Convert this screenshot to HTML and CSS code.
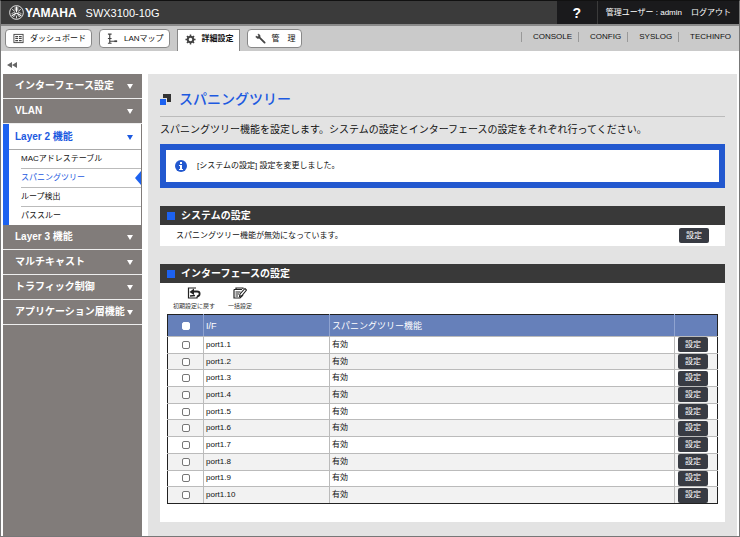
FILE: index.html
```html
<!DOCTYPE html>
<html lang="ja">
<head>
  <meta charset="UTF-8" />
  <meta name="viewport" content="width=device-width, initial-scale=1.0" />
  <title>SWX3100-10G</title>
  <link rel="stylesheet" href="styles.css">
</head>
<body>
  <header class="header">
    <svg class="logo-mark" viewBox="0 0 28 28" fill="none" stroke="#fff">
      <circle cx="14" cy="14" r="12.8" stroke-width="1.6"/>
      <path d="M14 13V3M14 15l-9 5M14 15l9 5" stroke-width="2.2"/>
      <path d="M11.500 4v5l2.500 2 2.500-2V4M4.500 16.500l4.500-2.500 3 1M7 22.500l4-2.500v-3M23.500 16.500L19 14l-3 1M21 22.500L17 20v-3" stroke-width="1.300"/>
      <path d="M6 8l5 4M22 8l-5 4M14 20v5" stroke-width="1.500"/>
    </svg>
    <span class="logo-text">YAMAHA</span>
    <span class="model">SWX3100-10G</span>
    <div class="user-area">
      <button type="button" class="help">?</button>
      <div class="user">
        <span>管理ユーザー : admin</span>
        <a href="#">ログアウト</a>
      </div>
    </div>
  </header>

  <div class="toolbar">
    <nav class="tabs">
      <a href="#" class="tab tab-dashboard">
        <svg class="tab-icon" viewBox="0 0 12 12" fill="none" stroke="#444">
          <rect x="1" y="1.500" width="10" height="9" />
          <path d="M2.500 4h3M6.500 4h3M2.500 6h3M6.500 6h3M2.500 8.300h3M6.500 8.300h3" stroke-width="1.200"/>
        </svg>
        <span>ダッシュボード</span>
      </a>
      <a href="#" class="tab tab-map">
        <svg class="tab-icon" viewBox="0 0 12 12" fill="none" stroke="#444">
          <path d="M1 1.300h4M3 1.300v9.500M1 6h4M3 9h8M1 11.200h4" stroke-width="1.300"/>
          <path d="M8 9h3" stroke-width="1.800"/>
        </svg>
        <span>LANマップ</span>
      </a>
      <a href="#" class="tab tab-detail active">
        <svg class="tab-icon" viewBox="0 0 12 12" fill="none" stroke="#444">
          <circle cx="6" cy="6" r="3" stroke-width="2.200"/>
          <path d="M6 .5v2M6 9.500v2M.5 6h2M9.500 6h2M2.100 2.100l1.400 1.400M8.500 8.500l1.400 1.400M9.900 2.100L8.500 3.500M3.500 8.500L2.100 9.900" stroke-width="1.600"/>
        </svg>
        <span>詳細設定</span>
      </a>
      <a href="#" class="tab tab-admin">
        <svg class="tab-icon" viewBox="0 0 12 12" fill="none" stroke="#444">
          <path d="M5 5l5.500 5.500" stroke-width="2" stroke-linecap="round"/>
          <path d="M3.200 1.200l.8 2-1 1-2-.8c0 2 1.500 3 3.200 2.400L5.500 4.500C6 2.800 5 1.200 3.200 1.200z" fill="#444" stroke-width=".6"/>
        </svg>
        <span>管　理</span>
      </a>
    </nav>
    <nav class="links">
      <a href="#">CONSOLE</a>
      <a href="#">CONFIG</a>
      <a href="#">SYSLOG</a>
      <a href="#">TECHINFO</a>
    </nav>
  </div>

  <div class="collapse">
    <button type="button" aria-label="メニューを閉じる">
      <svg viewBox="0 0 10 6"><path d="M5 0v6L0 3zM10 0v6L5 3z" fill="#666"/></svg>
    </button>
  </div>

  <div class="content">
    <nav class="sidebar">
      <a href="#" class="menu">インターフェース設定</a>
      <a href="#" class="menu">VLAN</a>
      <div class="menu-open">
        <a href="#" class="menu">Layer 2 機能</a>
        <ul>
          <li><a href="#">MACアドレステーブル</a></li>
          <li class="current"><a href="#">スパニングツリー</a></li>
          <li><a href="#">ループ検出</a></li>
          <li><a href="#">パススルー</a></li>
        </ul>
      </div>
      <a href="#" class="menu">Layer 3 機能</a>
      <a href="#" class="menu">マルチキャスト</a>
      <a href="#" class="menu">トラフィック制御</a>
      <a href="#" class="menu">アプリケーション層機能</a>
    </nav>

    <main class="main">
      <h1>
        <svg viewBox="0 0 11 11"><path d="M3 0h8v8H3z" fill="#333"/><path d="M0 4h7v7H0z" fill="#e3e3e3"/><path d="M0 5h6v6H0z" fill="#1d62f0"/></svg>
        スパニングツリー
      </h1>
      <p class="lead">スパニングツリー機能を設定します。システムの設定とインターフェースの設定をそれぞれ行ってください。</p>

      <div class="message">
        <svg viewBox="0 0 12 12">
          <circle cx="6" cy="6" r="6" fill="#2258cf"/>
          <path d="M5 2h2v2H5zM4 5h3v4h1v1H4V9h1V6H4z" fill="#fff"/>
        </svg>
        <span>[システムの設定] 設定を変更しました。</span>
      </div>

      <section class="panel">
        <h2>システムの設定</h2>
        <div class="status">
          <span>スパニングツリー機能が無効になっています。</span>
          <button type="button" class="btn">設定</button>
        </div>
      </section>

      <section class="panel">
        <h2>インターフェースの設定</h2>
        <div class="panel-body">
          <div class="actions">
            <button type="button">
              <svg viewBox="0 0 14 12" fill="none" stroke="#222">
                <path d="M9 1H1.500v10H10V9.500" stroke-width="1.200"/>
                <path d="M3 9l5-.5" stroke-width="1.500"/>
                <path d="M6 4.500h4c3.500 0 3.500 4.500 0 5" stroke-width="1.800"/>
                <path d="M2.500 5l4.500-3.500V8z" fill="#222" stroke="none"/>
              </svg>
              初期設定に戻す
            </button>
            <button type="button">
              <svg viewBox="0 0 14 12" fill="none" stroke="#222">
                <path d="M3 2.500V1h7v1M1 2.500h8M1 2.500v8.500h6l3-3" stroke-width="1.200"/>
                <path d="M2.500 5h5M2.500 7h3.500M2.500 9H5"/>
                <path d="M6.500 9.500L7 7l5-5.500L13.500 3 9 8.500z" fill="#fff" stroke-width="1.100"/>
              </svg>
              一括設定
            </button>
          </div>
          <table class="ports">
            <thead>
              <tr>
                <th class="col-check"><input type="checkbox" aria-label="すべて選択"></th>
                <th class="col-port">I/F</th>
                <th>スパニングツリー機能</th>
                <th class="col-button"></th>
              </tr>
            </thead>
            <tbody>
              <tr>
                <td><input type="checkbox" id="port1"></td>
                <td><label for="port1">port1.1</label></td>
                <td>有効</td>
                <td><button type="button" class="btn">設定</button></td>
              </tr>
              <tr>
                <td><input type="checkbox" id="port2"></td>
                <td><label for="port2">port1.2</label></td>
                <td>有効</td>
                <td><button type="button" class="btn">設定</button></td>
              </tr>
              <tr>
                <td><input type="checkbox" id="port3"></td>
                <td><label for="port3">port1.3</label></td>
                <td>有効</td>
                <td><button type="button" class="btn">設定</button></td>
              </tr>
              <tr>
                <td><input type="checkbox" id="port4"></td>
                <td><label for="port4">port1.4</label></td>
                <td>有効</td>
                <td><button type="button" class="btn">設定</button></td>
              </tr>
              <tr>
                <td><input type="checkbox" id="port5"></td>
                <td><label for="port5">port1.5</label></td>
                <td>有効</td>
                <td><button type="button" class="btn">設定</button></td>
              </tr>
              <tr>
                <td><input type="checkbox" id="port6"></td>
                <td><label for="port6">port1.6</label></td>
                <td>有効</td>
                <td><button type="button" class="btn">設定</button></td>
              </tr>
              <tr>
                <td><input type="checkbox" id="port7"></td>
                <td><label for="port7">port1.7</label></td>
                <td>有効</td>
                <td><button type="button" class="btn">設定</button></td>
              </tr>
              <tr>
                <td><input type="checkbox" id="port8"></td>
                <td><label for="port8">port1.8</label></td>
                <td>有効</td>
                <td><button type="button" class="btn">設定</button></td>
              </tr>
              <tr>
                <td><input type="checkbox" id="port9"></td>
                <td><label for="port9">port1.9</label></td>
                <td>有効</td>
                <td><button type="button" class="btn">設定</button></td>
              </tr>
              <tr>
                <td><input type="checkbox" id="port10"></td>
                <td><label for="port10">port1.10</label></td>
                <td>有効</td>
                <td><button type="button" class="btn">設定</button></td>
              </tr>
            </tbody>
          </table>
        </div>
      </section>
    </main>
  </div>
</body>
</html>
```

FILE: styles.css
```css
* {
  box-sizing: border-box;
}

body {
  display: flex;
  flex-direction: column;
  min-height: 100vh;
  margin: 0;
  border: 1px solid #777;
  border-top-color: #111;
  background-color: #fff;
  color: #111;
  font-family: "Liberation Sans", "Noto Sans CJK JP", sans-serif;
  font-size: 8px;
  line-height: 12px;
}

a {
  color: inherit;
  text-decoration: none;
}

button {
  padding: 0;
  border: none;
  background: none;
  color: inherit;
  font: inherit;
  cursor: pointer;
}

svg {
  display: block;
  flex: none;
}

/* header */
.header {
  display: flex;
  align-items: center;
  height: 23px;
  padding-left: 8px;
  background-color: #3b3b3b;
  color: #fff;
}

.logo-mark {
  width: 15px;
  height: 15px;
}

.logo-text {
  margin-left: 1px;
  font-size: 12px;
  font-weight: bold;
}

.model {
  margin-left: 9px;
  font-size: 11px;
}

.user-area {
  display: flex;
  align-self: stretch;
  margin-left: auto;
  background-color: #1a1a1c;
}

.help {
  width: 41px;
  border-right: 1px solid #3b3b3b;
  font-size: 14px;
  font-weight: bold;
}

.user {
  display: flex;
  align-items: center;
  gap: 9px;
  padding: 0 8px;
}

/* tabs */
.toolbar {
  display: flex;
  justify-content: space-between;
  height: 27px;
  padding: 0 8px 0 4px;
  border-top: 2px solid #8a8a8a;
  background-color: #cacaca;
}

.tabs {
  display: flex;
  align-items: flex-start;
  gap: 7px;
  padding-top: 3px;
}

.tab {
  display: flex;
  align-items: center;
  gap: 6px;
  height: 19px;
  padding: 0 5px 0 7px;
  border: 1px solid #888;
  border-radius: 4px;
  background-color: #fff;
}

.tab.active {
  height: 22px;
  padding-bottom: 3px;
  border-bottom: none;
  border-radius: 0;
  font-weight: bold;
}

.tab-icon {
  width: 11px;
  height: 11px;
}

.links {
  display: flex;
  padding-top: 6px;
}

.links a {
  height: 10px;
  padding: 0 6px 0 11px;
  border-left: 1px solid #999;
  line-height: 10px;
}

.links a:last-child {
  padding-right: 0;
}

.collapse {
  height: 23px;
  padding: 9px 6px 0;
}

.collapse svg {
  width: 10px;
  height: 6px;
}

/* sidebar */
.content {
  display: flex;
  flex: 1;
  gap: 6px;
  padding: 0 2px;
}

.sidebar {
  flex: none;
  width: 139px;
  background-color: #817c7a;
}

.menu {
  display: flex;
  align-items: center;
  justify-content: space-between;
  height: 25px;
  padding: 0 9px 0 12px;
  border-bottom: 1px solid #eee;
  color: #fff;
  font-size: 10px;
  font-weight: bold;
  white-space: nowrap;
}

.menu::after {
  content: "";
  border: 3px solid transparent;
  border-top: 5px solid;
  border-bottom: none;
}

.menu-open {
  padding-top: 1px;
  border-right: 1px solid #817c7a;
  border-left: 6px solid #1d62f0;
  background-color: #fff;
}

.menu-open .menu {
  padding: 0 8px 0 6px;
  border-bottom-color: #aaa;
  color: #1d5ae0;
}

.menu-open ul {
  margin: 0;
  padding: 0 0 0 12px;
  list-style: none;
}

.menu-open li {
  display: flex;
  align-items: center;
  justify-content: space-between;
  height: 19px;
  border-bottom: 1px solid #bbb;
}

.menu-open li:last-child {
  height: 18px;
  border-bottom: none;
}

.menu-open .current {
  color: #1d5ae0;
}

.current::after {
  content: "";
  border: 7px solid transparent;
  border-right: 6px solid #1d62f0;
  border-left: none;
}

/* main */
.main {
  flex: 1;
  min-width: 0;
  padding: 8px 12px 12px;
  background-color: #e3e3e3;
}

h1 {
  display: flex;
  align-items: center;
  gap: 8px;
  height: 35px;
  margin: 0;
  border-bottom: 1px solid #bbb;
  color: #1d5ae0;
  font-size: 14px;
  font-weight: 500;
}

h1 svg {
  width: 11px;
  height: 11px;
}

.lead {
  margin: 7px 0 8px;
  font-size: 10px;
}

.message {
  display: flex;
  align-items: center;
  gap: 10px;
  height: 44px;
  margin-bottom: 18px;
  padding: 0 9px;
  border: 6px solid #2258cf;
  background-color: #fff;
}

.message svg {
  width: 12px;
  height: 12px;
}

.panel {
  background-color: #fff;
}

.panel + .panel {
  margin-top: 18px;
}

h2 {
  display: flex;
  align-items: center;
  gap: 6px;
  height: 19px;
  margin: 0;
  padding: 0 7px;
  background-color: #393939;
  color: #fff;
  font-size: 10px;
}

h2::before {
  content: "";
  width: 8px;
  height: 8px;
  background-color: #1d62f0;
}

.status {
  display: flex;
  align-items: center;
  justify-content: space-between;
  padding: 3px 16px;
}

.btn {
  display: block;
  width: 30px;
  height: 15px;
  border-radius: 2px;
  background-color: #383b43;
  color: #fff;
}

.panel-body {
  padding: 4px 7px 18px;
}

.actions {
  display: flex;
  gap: 13px;
  padding: 0 6px 3px;
}

.actions button {
  display: flex;
  flex-direction: column;
  align-items: center;
  gap: 2px;
  color: #333;
  font-size: 6px;
  line-height: 10px;
}

.actions svg {
  width: 14px;
  height: 12px;
}

.ports {
  width: 100%;
  height: 190px;
  border: 1px solid #222;
  border-collapse: collapse;
  table-layout: fixed;
}

.ports th,
.ports td {
  height: 16px;
  padding: 0 2px;
  border: 1px solid #bbb;
  text-align: left;
}

.ports th {
  height: 22px;
  border-color: #222 #8fa3d0;
  border-bottom-color: #bbb;
  background-color: #6680ba;
  color: #fff;
  font-size: 9px;
  font-weight: normal;
}

.ports tr :first-child {
  text-align: center;
}

.ports td:last-child {
  padding-left: 3px;
}

.ports th:first-child,
.ports td:first-child {
  border-left-color: #222;
}

.ports th:last-child,
.ports td:last-child {
  border-right-color: #222;
}

.ports tr:last-child td {
  border-bottom-color: #222;
}

.ports tbody tr:nth-child(even) {
  background-color: #f2f2f2;
}

.col-check {
  width: 36px;
}

.col-port {
  width: 126px;
}

.col-button {
  width: 43px;
}

.ports input {
  display: block;
  width: 8px;
  height: 8px;
  margin: 0 auto;
  border: 1px solid #777;
  border-radius: 2px;
  background-color: #fff;
  appearance: none;
}

.ports input:checked {
  background-color: #1d62f0;
}

.ports th input {
  border-color: #fff;
}
```
